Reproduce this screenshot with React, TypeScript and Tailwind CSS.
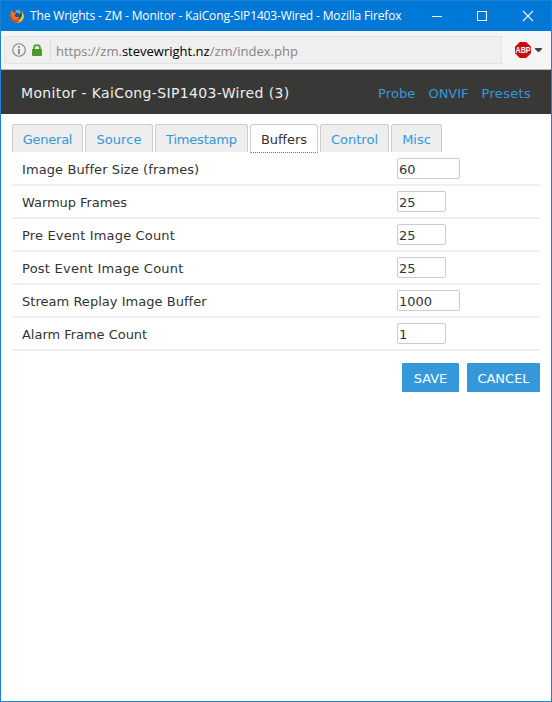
import React from "react";

const tabs = [
  { label: "General", box: "w-[71px] tracking-[-0.25px]" },
  { label: "Source", box: "w-[68px] tracking-[0.1px]" },
  { label: "Timestamp", box: "w-[93px] tracking-[-0.2px]" },
  { label: "Buffers", box: "w-[68px]", active: true },
  { label: "Control", box: "w-[69px]" },
  { label: "Misc", box: "w-[51px]" },
];

const fields = [
  { label: "Image Buffer Size (frames)", value: "60", box: "w-[63px]", track: "tracking-[0.09px]" },
  { label: "Warmup Frames", value: "25", box: "w-[49px]", track: "tracking-[-0.05px]" },
  { label: "Pre Event Image Count", value: "25", box: "w-[49px]", track: "tracking-[0.16px]" },
  { label: "Post Event Image Count", value: "25", box: "w-[49px]", track: "tracking-[0.25px]" },
  { label: "Stream Replay Image Buffer", value: "1000", box: "w-[63px]", track: "tracking-[0.03px]" },
  { label: "Alarm Frame Count", value: "1", box: "w-[49px]", track: "tracking-[-0.03px]" },
];

function FirefoxIcon() {
  return (
    <svg width="14" height="14" viewBox="0 0 14 14">
      <circle cx="7" cy="7" r="6.800" fill="#e8651a" />
      <path d="M11.500 2.200C14.400 5 14.500 9.200 12 11.800 10.500 13.300 8.500 13.800 6.600 13.600 10 12 12.300 8 11.500 2.200Z" fill="#fbc640" />
      <path d="M2.600 2.400C4.500-.4 9.300-.6 11.300 2.400 12.600 5 12 8.600 9.800 9.800 8 10.600 5.600 10 4.800 8.200Z" fill="#1d4f8f" />
      <path d="M5 1.200C7 .2 9.600.6 10.900 2.600L9.600 5.400 7.400 3.800 5.600 3.600Z" fill="#55b0dc" />
      <path
        d="M1.200 1.600C1.700 2.400 2.600 2.800 3.600 2.900 4.600 3 5.400 3.600 6.200 4.200 6 5.200 4.900 5.400 4.500 6.200 5 7.600 6.200 8.200 7.600 7.900 8.600 7.700 9.200 7.500 9.500 7.900 9 9.500 7.200 10.200 5.600 9.900 5 11.400 2.600 11.200 1.200 9.200.2 7 .2 3.600 1.200 1.600Z"
        fill="#ec7423"
      />
      <path d="M.6 4.500C.2 7 .8 9.600 2.800 11.600 5 13.500 8 13.600 9.800 12.400 6.500 12.700 3.200 11.500 1.900 8.600 1.300 7.300.8 6 .6 4.500Z" fill="#c63d14" />
    </svg>
  );
}

function TitleBar() {
  return (
    <div className="flex h-[30px] items-center bg-[#0078d7] pl-[9px] text-white">
      <FirefoxIcon />
      <span className="ml-[6px] w-[390px] whitespace-nowrap font-['Open_Sans',sans-serif] text-[12px] tracking-[-0.15px]">
        The Wrights - ZM - Monitor - KaiCong-SIP1403-Wired - Mozilla Firefox
      </span>
      <svg className="ml-[11px]" width="102" height="12" viewBox="0 0 102 12" fill="none" stroke="#fff">
        <path d="M1 6.500H11" />
        <rect x="46.500" y="1.500" width="9" height="9" />
        <path d="M92 1L102 11M102 1L92 11" strokeWidth="1.100" />
      </svg>
    </div>
  );
}

function AddressBar() {
  return (
    <div className="flex h-[39px] items-start border-b border-[#b6b6b6] bg-[#f5f5f5] pl-[3px] pt-[5px]">
      <div className="flex h-[28px] w-[498px] items-center border border-[#e3e3e3] bg-[#efefef] pl-[7px]">
        <svg width="14" height="14" viewBox="0 0 14 14" fill="none" stroke="#808080">
          <circle cx="7" cy="7" r="6.300" strokeWidth="1.100" />
          <path d="M7 6V11M7 3V4.700" strokeWidth="1.700" />
        </svg>
        <svg className="ml-[6px]" width="10" height="12" viewBox="0 0 10 12">
          <path d="M2 6V3.800C2 .3 8 .3 8 3.800V6" fill="none" stroke="#4d9a26" strokeWidth="1.700" />
          <rect y="5" width="10" height="7" rx=".7" fill="#4d9a26" />
        </svg>
        <div className="ml-[8px] h-[19px] w-px bg-[#dcdcdc]" />
        <span className="ml-[5px] whitespace-nowrap pt-[3px] font-['Open_Sans',sans-serif] text-[13px] text-[#858585]">
          https://zm.<span className="text-black">stevewright.nz</span>/zm/index.php
        </span>
      </div>
      <div className="ml-[13px] flex h-[28px] items-center">
        <svg className="overflow-visible" width="16" height="16" viewBox="0 0 16 16">
          <path d="M4.800 0H11.200L16 4.800V11.200L11.200 16H4.800L0 11.200V4.800Z" fill="#c70d0d" />
          <text
            x="0.500"
            y="11"
            textLength="15"
            lengthAdjust="spacingAndGlyphs"
            fill="#fff"
            fontSize="8.500"
            fontWeight="bold"
            fontFamily="Liberation Sans, sans-serif"
          >
            ABP
          </text>
        </svg>
        <svg className="ml-[4px]" width="7" height="4" viewBox="0 0 7 4">
          <path d="M0 0H7V1L4 4H3L0 1Z" fill="#404040" />
        </svg>
      </div>
    </div>
  );
}

export default function App() {
  return (
    <div className="flex h-[702px] w-[552px] flex-col overflow-hidden border border-[#1c80d4] bg-white font-['DejaVu_Sans',Verdana,sans-serif] text-[13px] text-[#333]">
      <TitleBar />
      <AddressBar />
      <header className="flex h-[44px] items-center bg-[#383836] pl-[20px] pr-[20px] pt-[2px]">
        <h1 className="whitespace-nowrap text-[14px] tracking-[0.36px] text-[#eee]">Monitor - KaiCong-SIP1403-Wired (3)</h1>
        <nav className="ml-auto flex gap-[13px] pt-px text-[#3498db]">
          <a className="tracking-[0.1px]">Probe</a>
          <a>ONVIF</a>
          <a className="tracking-[0.3px]">Presets</a>
        </nav>
      </header>
      <main className="px-[11px] pt-[10px]">
        <div className="flex h-[29px] items-start gap-[2px]">
          {tabs.map((t) => (
            <div
              key={t.label}
              className={`flex justify-center rounded-t-[3px] border border-[#ccc] pt-[5px] ${t.box} ${
                t.active
                  ? "h-[29px] border-b-[#6a6ab8] bg-white text-[#333] [border-bottom-style:dotted]"
                  : "h-[28px] border-b-0 bg-[#eee] text-[#3498db]"
              }`}
            >
              {t.label}
            </div>
          ))}
        </div>
        <div>
          {fields.map((f) => (
            <label key={f.label} className="flex h-[33px] items-center border-b-2 border-[#f0f0f0] pl-[10px]">
              <span className={`w-[375px] whitespace-nowrap pt-[3px] ${f.track}`}>{f.label}</span>
              <input
                className={`h-[21px] rounded-[2px] border border-[#ccc] bg-white pl-px pt-[2px] text-[#333] outline-none ${f.box}`}
                defaultValue={f.value}
              />
            </label>
          ))}
        </div>
        <div className="mt-[12px] flex justify-end gap-[8px] text-white">
          <button className="h-[29px] w-[57px] rounded-[1px] bg-[#3498db] pt-[2px]">SAVE</button>
          <button className="h-[29px] w-[73px] rounded-[1px] bg-[#3498db] pt-[2px]">CANCEL</button>
        </div>
      </main>
    </div>
  );
}
